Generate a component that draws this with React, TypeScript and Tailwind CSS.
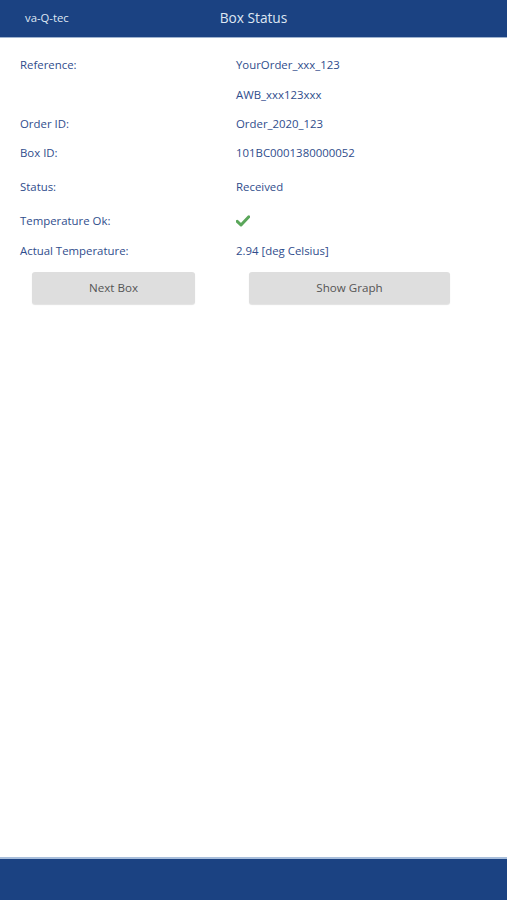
const rows: { label: string; value: string; h: string }[] = [
  { label: "Reference:", value: "YourOrder_xxx_123", h: "h-[30px]" },
  { label: "", value: "AWB_xxx123xxx", h: "h-[29px]" },
  { label: "Order ID:", value: "Order_2020_123", h: "h-[29px]" },
  { label: "Box ID:", value: "101BC0001380000052", h: "h-[30px]" },
  { label: "Status:", value: "Received", h: "h-[38px]" },
]

export default function App() {
  return (
    <div className="flex h-[900px] w-full flex-col bg-white font-['Open_Sans',sans-serif] text-[11.4px] text-[#2f4d8c]">
      <header className="relative flex h-[38px] shrink-0 items-center border-b border-[#9fb3cf] bg-[#1b4282] text-[#dfe7f3]">
        <span className="pl-[25px] text-[11.3px]">va-Q-tec</span>
        <span className="absolute left-1/2 -translate-x-1/2 text-[13.7px]">Box Status</span>
      </header>

      <main className="flex-1 pt-[12px]">
        {rows.map((r, i) => (
          <div key={i} className={`flex items-center ${r.h}`}>
            <span className="w-[236px] pl-[20px]">{r.label}</span>
            <span>{r.value}</span>
          </div>
        ))}
        <div className="flex h-[30px] items-center">
          <span className="w-[236px] pl-[20px]">Temperature Ok:</span>
          <svg width="14" height="12" viewBox="0 0 14 12">
            <path d="M1.2 6.4 L5 10 L12.8 1.8" fill="none" stroke="#5aa65a" strokeWidth="3" strokeLinecap="round" strokeLinejoin="round" />
          </svg>
        </div>
        <div className="flex h-[30px] items-center">
          <span className="w-[236px] pl-[20px]">Actual Temperature:</span>
          <span>2.94 [deg Celsius]</span>
        </div>

        <div className="mt-[6px] flex">
          <button className="ml-[32px] h-[32px] w-[163px] rounded-[3px] bg-[#dedede] text-[11.6px] text-[#555] shadow-[0_1px_1px_rgba(0,0,0,0.12)]">
            Next Box
          </button>
          <button className="ml-[54px] h-[32px] w-[201px] rounded-[3px] bg-[#dedede] text-[11.6px] text-[#555] shadow-[0_1px_1px_rgba(0,0,0,0.12)]">
            Show Graph
          </button>
        </div>
      </main>

      <footer className="h-[43px] shrink-0 border-t-2 border-[#a8bedb] bg-[#1b4282]" />
    </div>
  )
}
